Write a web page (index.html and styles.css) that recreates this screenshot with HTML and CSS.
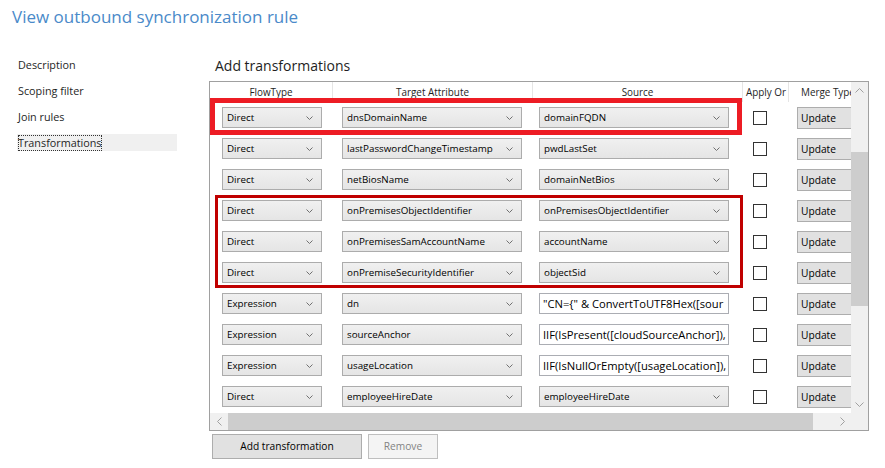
FILE: index.html
```html
<!DOCTYPE html>
<html>
<head>
<meta charset="utf-8">
<link rel="stylesheet" href="styles.css">
</head>
<body>
<h1 class="title">View outbound synchronization rule</h1>
<div class="main">
  <nav class="nav">
    <div class="nav-item">Description</div>
    <div class="nav-item">Scoping filter</div>
    <div class="nav-item">Join rules</div>
    <div class="nav-item active"><span class="focus">Transformations</span></div>
  </nav>
  <section class="panel">
    <h2 class="heading">Add transformations</h2>
    <div class="grid-box">
      <div class="viewport">
        <div class="row header">
          <div class="c c1 hc">FlowType</div>
          <div class="c c2 hc">Target Attribute</div>
          <div class="c c3 hc">Source</div>
          <div class="c c4 hc left">Apply Or</div>
          <div class="c c5 hc left">Merge Type</div>
        </div>

        <div class="row">
          <div class="c c1"><div class="combo w1"><span>Direct</span><svg class="chev" width="7" height="4" viewBox="0 0 7 4"><path d="M0.5 0.5L3.5 3.5L6.5 0.5"/></svg></div></div>
          <div class="c c2"><div class="combo w2"><span>dnsDomainName</span><svg class="chev" width="7" height="4" viewBox="0 0 7 4"><path d="M0.5 0.5L3.5 3.5L6.5 0.5"/></svg></div></div>
          <div class="c c3"><div class="combo w3"><span>domainFQDN</span><svg class="chev" width="7" height="4" viewBox="0 0 7 4"><path d="M0.5 0.5L3.5 3.5L6.5 0.5"/></svg></div></div>
          <div class="c c4"><div class="check"></div></div>
          <div class="c c5"><div class="btn-upd">Update</div></div>
        </div>

        <div class="row">
          <div class="c c1"><div class="combo w1"><span>Direct</span><svg class="chev" width="7" height="4" viewBox="0 0 7 4"><path d="M0.5 0.5L3.5 3.5L6.5 0.5"/></svg></div></div>
          <div class="c c2"><div class="combo w2"><span>lastPasswordChangeTimestamp</span><svg class="chev" width="7" height="4" viewBox="0 0 7 4"><path d="M0.5 0.5L3.5 3.5L6.5 0.5"/></svg></div></div>
          <div class="c c3"><div class="combo w3"><span>pwdLastSet</span><svg class="chev" width="7" height="4" viewBox="0 0 7 4"><path d="M0.5 0.5L3.5 3.5L6.5 0.5"/></svg></div></div>
          <div class="c c4"><div class="check"></div></div>
          <div class="c c5"><div class="btn-upd">Update</div></div>
        </div>

        <div class="row">
          <div class="c c1"><div class="combo w1"><span>Direct</span><svg class="chev" width="7" height="4" viewBox="0 0 7 4"><path d="M0.5 0.5L3.5 3.5L6.5 0.5"/></svg></div></div>
          <div class="c c2"><div class="combo w2"><span>netBiosName</span><svg class="chev" width="7" height="4" viewBox="0 0 7 4"><path d="M0.5 0.5L3.5 3.5L6.5 0.5"/></svg></div></div>
          <div class="c c3"><div class="combo w3"><span>domainNetBios</span><svg class="chev" width="7" height="4" viewBox="0 0 7 4"><path d="M0.5 0.5L3.5 3.5L6.5 0.5"/></svg></div></div>
          <div class="c c4"><div class="check"></div></div>
          <div class="c c5"><div class="btn-upd">Update</div></div>
        </div>

        <div class="row">
          <div class="c c1"><div class="combo w1"><span>Direct</span><svg class="chev" width="7" height="4" viewBox="0 0 7 4"><path d="M0.5 0.5L3.5 3.5L6.5 0.5"/></svg></div></div>
          <div class="c c2"><div class="combo w2"><span>onPremisesObjectIdentifier</span><svg class="chev" width="7" height="4" viewBox="0 0 7 4"><path d="M0.5 0.5L3.5 3.5L6.5 0.5"/></svg></div></div>
          <div class="c c3"><div class="combo w3"><span>onPremisesObjectIdentifier</span><svg class="chev" width="7" height="4" viewBox="0 0 7 4"><path d="M0.5 0.5L3.5 3.5L6.5 0.5"/></svg></div></div>
          <div class="c c4"><div class="check"></div></div>
          <div class="c c5"><div class="btn-upd">Update</div></div>
        </div>

        <div class="row">
          <div class="c c1"><div class="combo w1"><span>Direct</span><svg class="chev" width="7" height="4" viewBox="0 0 7 4"><path d="M0.5 0.5L3.5 3.5L6.5 0.5"/></svg></div></div>
          <div class="c c2"><div class="combo w2"><span>onPremisesSamAccountName</span><svg class="chev" width="7" height="4" viewBox="0 0 7 4"><path d="M0.5 0.5L3.5 3.5L6.5 0.5"/></svg></div></div>
          <div class="c c3"><div class="combo w3"><span>accountName</span><svg class="chev" width="7" height="4" viewBox="0 0 7 4"><path d="M0.5 0.5L3.5 3.5L6.5 0.5"/></svg></div></div>
          <div class="c c4"><div class="check"></div></div>
          <div class="c c5"><div class="btn-upd">Update</div></div>
        </div>

        <div class="row">
          <div class="c c1"><div class="combo w1"><span>Direct</span><svg class="chev" width="7" height="4" viewBox="0 0 7 4"><path d="M0.5 0.5L3.5 3.5L6.5 0.5"/></svg></div></div>
          <div class="c c2"><div class="combo w2"><span>onPremiseSecurityIdentifier</span><svg class="chev" width="7" height="4" viewBox="0 0 7 4"><path d="M0.5 0.5L3.5 3.5L6.5 0.5"/></svg></div></div>
          <div class="c c3"><div class="combo w3"><span>objectSid</span><svg class="chev" width="7" height="4" viewBox="0 0 7 4"><path d="M0.5 0.5L3.5 3.5L6.5 0.5"/></svg></div></div>
          <div class="c c4"><div class="check"></div></div>
          <div class="c c5"><div class="btn-upd">Update</div></div>
        </div>

        <div class="row">
          <div class="c c1"><div class="combo w1"><span>Expression</span><svg class="chev" width="7" height="4" viewBox="0 0 7 4"><path d="M0.5 0.5L3.5 3.5L6.5 0.5"/></svg></div></div>
          <div class="c c2"><div class="combo w2"><span>dn</span><svg class="chev" width="7" height="4" viewBox="0 0 7 4"><path d="M0.5 0.5L3.5 3.5L6.5 0.5"/></svg></div></div>
          <div class="c c3"><div class="textbox w3">"CN={" &amp; ConvertToUTF8Hex([sour</div></div>
          <div class="c c4"><div class="check"></div></div>
          <div class="c c5"><div class="btn-upd">Update</div></div>
        </div>

        <div class="row">
          <div class="c c1"><div class="combo w1"><span>Expression</span><svg class="chev" width="7" height="4" viewBox="0 0 7 4"><path d="M0.5 0.5L3.5 3.5L6.5 0.5"/></svg></div></div>
          <div class="c c2"><div class="combo w2"><span>sourceAnchor</span><svg class="chev" width="7" height="4" viewBox="0 0 7 4"><path d="M0.5 0.5L3.5 3.5L6.5 0.5"/></svg></div></div>
          <div class="c c3"><div class="textbox w3">IIF(IsPresent([cloudSourceAnchor]),</div></div>
          <div class="c c4"><div class="check"></div></div>
          <div class="c c5"><div class="btn-upd">Update</div></div>
        </div>

        <div class="row">
          <div class="c c1"><div class="combo w1"><span>Expression</span><svg class="chev" width="7" height="4" viewBox="0 0 7 4"><path d="M0.5 0.5L3.5 3.5L6.5 0.5"/></svg></div></div>
          <div class="c c2"><div class="combo w2"><span>usageLocation</span><svg class="chev" width="7" height="4" viewBox="0 0 7 4"><path d="M0.5 0.5L3.5 3.5L6.5 0.5"/></svg></div></div>
          <div class="c c3"><div class="textbox w3">IIF(IsNullOrEmpty([usageLocation]),</div></div>
          <div class="c c4"><div class="check"></div></div>
          <div class="c c5"><div class="btn-upd">Update</div></div>
        </div>

        <div class="row">
          <div class="c c1"><div class="combo w1"><span>Direct</span><svg class="chev" width="7" height="4" viewBox="0 0 7 4"><path d="M0.5 0.5L3.5 3.5L6.5 0.5"/></svg></div></div>
          <div class="c c2"><div class="combo w2"><span>employeeHireDate</span><svg class="chev" width="7" height="4" viewBox="0 0 7 4"><path d="M0.5 0.5L3.5 3.5L6.5 0.5"/></svg></div></div>
          <div class="c c3"><div class="combo w3"><span>employeeHireDate</span><svg class="chev" width="7" height="4" viewBox="0 0 7 4"><path d="M0.5 0.5L3.5 3.5L6.5 0.5"/></svg></div></div>
          <div class="c c4"><div class="check"></div></div>
          <div class="c c5"><div class="btn-upd">Update</div></div>
        </div>
      </div>

      <div class="vscroll">
        <div class="sb-btn"><svg width="9" height="5" viewBox="0 0 9 5"><path d="M0.5 4.5L4.5 0.5L8.5 4.5"/></svg></div>
        <div class="vtrack"><div class="vthumb"></div></div>
        <div class="sb-btn"><svg width="9" height="5" viewBox="0 0 9 5"><path d="M0.5 0.5L4.5 4.5L8.5 0.5"/></svg></div>
      </div>

      <div class="hscroll">
        <div class="sb-btn"><svg width="5" height="9" viewBox="0 0 5 9"><path d="M4.5 0.5L0.5 4.5L4.5 8.5"/></svg></div>
        <div class="hthumb"></div>
        <div class="htrack"></div>
        <div class="sb-btn"><svg width="5" height="9" viewBox="0 0 5 9"><path d="M0.5 0.5L4.5 4.5L0.5 8.5"/></svg></div>
      </div>
      <div class="corner"></div>
    </div>

    <div class="buttons">
      <div class="btn">Add transformation</div>
      <div class="btn disabled">Remove</div>
    </div>

    <div class="mark mark1"></div>
    <div class="mark mark2"></div>
  </section>
</div>
</body>
</html>
```
FILE: styles.css
```css
html, body {
  margin: 0;
  padding: 0;
  background: #ffffff;
}
body {
  font-family: "Open Sans", "Noto Sans", sans-serif;
  color: #1e1e1e;
  width: 885px;
  height: 468px;
  overflow: hidden;
}
.title {
  margin: 0;
  padding: 5px 0 0 12px;
  font-size: 17px;
  line-height: 24px;
  font-weight: 400;
  color: #4a8ac9;
}
.main {
  display: flex;
  margin-top: 27px;
  padding-left: 17px;
}
.nav {
  width: 160px;
  margin-right: 32px;
  display: flex;
  flex-direction: column;
  gap: 9px;
}
.nav-item {
  height: 17px;
  line-height: 17px;
  font-size: 10.8px;
  padding-left: 1px;
}
.nav-item.active {
  background: #f0f0f0;
}
.focus {
  outline: 1px dotted #333;
  outline-offset: -1px;
  display: inline-block;
  height: 16px;
  line-height: 16px;
}
.panel {
  position: relative;
  width: 660px;
}
.heading {
  margin: 0 0 5px 6px;
  font-size: 14px;
  line-height: 20px;
  font-weight: 400;
  color: #1e1e1e;
}
.grid-box {
  border: 1px solid #a0a0a0;
  display: grid;
  grid-template-columns: 641px 17px;
  grid-template-rows: 331px 17px;
  width: 658px;
}
.viewport {
  overflow: hidden;
  position: relative;
}
.row {
  display: flex;
  height: 31px;
  align-items: center;
  width: 700px;
}
.row.header {
  height: 20px;
  align-items: stretch;
}
.c {
  flex: none;
  display: flex;
  align-items: center;
  box-sizing: border-box;
}
.c1 { width: 123px; padding-left: 12px; }
.c2 { width: 200px; padding-left: 9px; }
.c3 { width: 210px; padding-left: 6px; }
.c4 { width: 46px; padding-left: 10px; }
.c5 { width: 120px; padding-left: 8px; }
.hc {
  justify-content: center;
  padding-left: 0;
  border-right: 1px solid #e5e5e5;
  font-size: 9.9px;
  white-space: nowrap;
  overflow: hidden;
  color: #1e1e1e;
}
.hc.left {
  justify-content: flex-start;
  padding-left: 3px;
}
.c5.hc { padding-left: 12px; }
.combo {
  box-sizing: border-box;
  height: 21px;
  border: 1px solid #acacac;
  background: linear-gradient(#f0f0f0, #e5e5e5);
  display: flex;
  align-items: center;
  justify-content: space-between;
  padding: 0 8px 0 4px;
  font-size: 9.8px;
  color: #000;
  white-space: nowrap;
}
.w1 { width: 100px; }
.w2 { width: 180px; }
.w3 { width: 190px; }
.chev {
  flex: none;
}
.chev path {
  fill: none;
  stroke: #707070;
  stroke-width: 1;
}
.textbox {
  box-sizing: border-box;
  height: 21px;
  border: 1px solid #abadb3;
  background: #fff;
  padding: 0 3px;
  font-size: 11.2px;
  line-height: 19px;
  white-space: nowrap;
  overflow: hidden;
  color: #000;
}
.check {
  width: 14px;
  height: 14px;
  box-sizing: border-box;
  border: 1px solid #333;
  background: #fff;
}
.btn-upd {
  box-sizing: border-box;
  width: 70px;
  height: 22px;
  border: 1px solid #adadad;
  background: #e1e1e1;
  font-size: 10.2px;
  line-height: 20px;
  padding-left: 3px;
  color: #000;
}
.vscroll {
  background: #f0f0f0;
  display: flex;
  flex-direction: column;
}
.sb-btn {
  flex: none;
  width: 17px;
  height: 17px;
  display: flex;
  align-items: center;
  justify-content: center;
}
.sb-btn path {
  fill: none;
  stroke: #a0a0a0;
  stroke-width: 1;
}
.vtrack {
  flex: 1;
  padding-top: 53px;
}
.vthumb {
  height: 154px;
  width: 17px;
  background: #cdcdcd;
}
.hscroll {
  background: #f0f0f0;
  display: flex;
}
.hthumb {
  width: 585px;
  background: #cdcdcd;
}
.htrack {
  flex: 1;
}
.hscroll .sb-btn:first-child {
  width: 18px;
}
.corner {
  background: #f0f0f0;
}
.buttons {
  display: flex;
  gap: 6px;
  margin: 3px 0 0 3px;
}
.btn {
  box-sizing: border-box;
  height: 25px;
  width: 150px;
  border: 1px solid #adadad;
  background: #e1e1e1;
  font-size: 10.2px;
  line-height: 23px;
  text-align: center;
  color: #000;
}
.btn.disabled {
  width: 70px;
  background: #f4f4f4;
  border-color: #bfbfbf;
  color: #838383;
}
.mark {
  position: absolute;
  box-sizing: border-box;
  pointer-events: none;
}
.mark1 {
  left: 1px;
  top: 42px;
  width: 532px;
  height: 37px;
  border: 5px solid #ed1c24;
}
.mark2 {
  left: 6px;
  top: 139px;
  width: 528px;
  height: 93px;
  border: 3px solid #c00000;
}
```
